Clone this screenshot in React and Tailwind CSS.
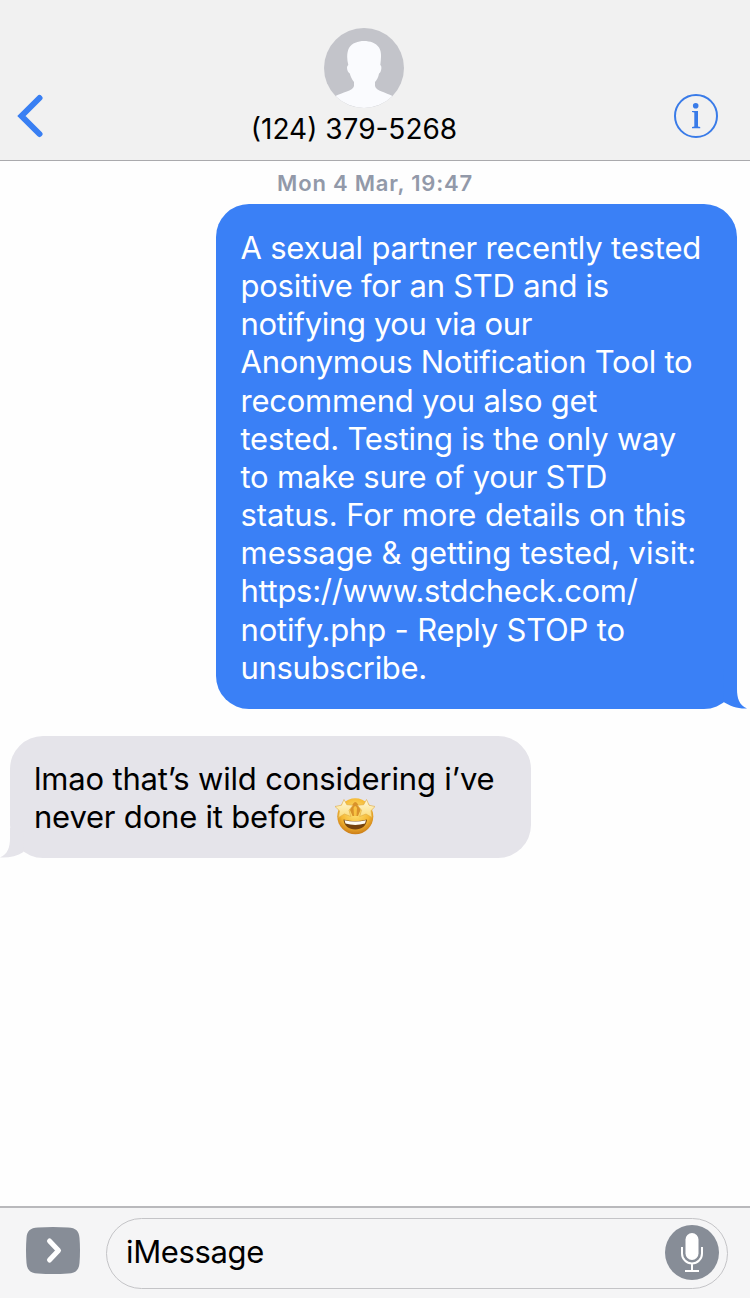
import React from "react";

const sentLines = [
    { text: "A sexual partner recently tested", tracking: "tracking-[-0.2px]" },
    { text: "positive for an STD and is", tracking: "tracking-[-0.25px]" },
    { text: "notifying you via our", tracking: "tracking-[-0.36px]" },
    { text: "Anonymous Notification Tool to", tracking: "tracking-[-0.25px]" },
    { text: "recommend you also get", tracking: "tracking-[-0.25px]" },
    { text: "tested. Testing is the only way", tracking: "tracking-[-0.24px]" },
    { text: "to make sure of your STD", tracking: "tracking-[-0.25px]" },
    { text: "status. For more details on this", tracking: "tracking-[-0.11px]" },
    { text: "message & getting tested, visit:", tracking: "tracking-[-0.03px]" },
    { text: "https://www.stdcheck.com/", tracking: "tracking-[-0.31px]" },
    { text: "notify.php - Reply STOP to", tracking: "tracking-[-0.18px]" },
    { text: "unsubscribe.", tracking: "tracking-[-0.3px]" },
];

const Avatar = () => (
    <svg className="block h-20 w-20" viewBox="0 0 80 80">
        <circle cx="40" cy="40" r="40" fill="#c3c4ca" />
        <path
            d="M11.500 68C18 64.500 29 63 30 58V54C27.500 51 26.500 48 25.800 45.500C23.500 44.500 22 39 23.800 37.500L24.300 37C22.500 30 23 24 25 20C28 15 34 13 40 13C46 13 52 15 55 19.500C58 24 57 31 56.300 37C58.500 38 57 45 55 45.500C54.500 49 53 52 51 54V58C52 63 62 64.500 68.500 68A40 40 0 0 1 11.500 68Z"
            fill="#fafbfe"
        />
    </svg>
);

// Face with star eyes, drawn on a 40 unit grid
const StarStruck = () => (
    <svg className="-mt-0.5 ml-[9px] block h-10 w-10" viewBox="0 0 40 40">
        <defs>
            <radialGradient id="face" cx="50%" cy="38%" r="62%">
                <stop offset="0" stopColor="#ffe67a" />
                <stop offset="0.650" stopColor="#f5b833" />
                <stop offset="1" stopColor="#cb7c17" />
            </radialGradient>
            <linearGradient id="star" x1="0" y1="0" x2="0" y2="1">
                <stop offset="0" stopColor="#fff9dc" />
                <stop offset="1" stopColor="#fbdc78" />
            </linearGradient>
        </defs>
        <circle cx="20.300" cy="20.300" r="18" fill="url(#face)" />
        <path d="M15 14Q18 6 20.300 6T25.500 14L23 20H17.500Z" fill="#d9922a" />
        <path d="M18.500 12Q20.300 8 22 12L21.500 20H19Z" fill="#f8c342" />
        <path d="M8.500 23.500Q20.300 27 32 23.500C31.500 30 26.500 33.500 20.300 33.500S9 30 8.500 23.500Z" fill="#75430f" />
        <path d="M9.500 24.200Q20.300 27 31 24.200L30 27.500Q20.300 30.300 10.500 27.500Z" fill="#fffdf4" />
        <path
            d="M9 3.500L11.800 8.700L18 9.300L14 14.200L15.800 20.500L9.500 18L3.500 21.500L4.500 14.800L0 10.500L6.400 9.200Z"
            fill="url(#star)"
            stroke="#dfaa42"
            strokeWidth="0.600"
            strokeLinejoin="round"
        />
        <path
            d="M31.500 3.500L28.700 8.700L22.500 9.300L26.500 14.200L24.700 20.500L31 18L37 21.500L36 14.800L40 10.500L34.100 9.200Z"
            fill="url(#star)"
            stroke="#dfaa42"
            strokeWidth="0.600"
            strokeLinejoin="round"
        />
    </svg>
);

const Header = () => (
    <header className="flex h-[161px] shrink-0 justify-between border-b border-[#aaaaad] bg-[#f1f1f1] pl-4 pr-8">
        <button className="mt-[94px] h-11 w-11" aria-label="Back">
            <svg className="block h-11 w-11" viewBox="0 0 44 44" fill="none">
                <path d="M23.500 4L5.500 22L23.500 40" stroke="#397ff3" strokeWidth="6" strokeLinecap="round" />
            </svg>
        </button>
        <div className="mr-[26px] flex flex-col items-center pt-7">
            <div className="pl-[19px]">
                <Avatar />
            </div>
            <h1 className="whitespace-nowrap text-[28px] leading-[42px] text-black">(124) 379-5268</h1>
        </div>
        <button className="mt-[94px] h-11 w-11" aria-label="Details">
            <svg className="block h-11 w-11" viewBox="0 0 44 44" fill="none">
                <circle cx="22" cy="22" r="21" stroke="#397be8" strokeWidth="2" />
                <circle cx="21.700" cy="11.700" r="2.800" fill="#397be8" />
                <path d="M18 17H24V32.500L26.200 33V34.200H18V33L20.300 32.500V18.500L18 18Z" fill="#397be8" />
            </svg>
        </button>
    </header>
);

const SentBubble = () => (
    <div className="relative ml-[216px] h-[505px] w-[521px] rounded-[33px] bg-[#3a80f6] pl-[24.5px] pt-[25px] text-[31px] leading-[38.16px] text-white">
        {sentLines.map((line) => (
            <p key={line.text} className={`whitespace-nowrap ${line.tracking}`}>
                {line.text}
            </p>
        ))}
        <svg className="absolute -right-[11px] bottom-0 h-10 w-11" viewBox="0 0 44 40">
            <path d="M19 0H33V20C33 29 35 36 43 39.500C34 40 26 37 19.500 33Z" fill="#3a80f6" />
        </svg>
    </div>
);

const ReceivedBubble = () => (
    <div className="relative ml-[10px] mt-[27px] h-[122px] w-[521px] rounded-[33px] bg-[#e5e4ea] pl-6 pt-6 text-[31px] leading-[38px] text-black">
        <p className="whitespace-nowrap tracking-[-0.18px]">lmao that’s wild considering i’ve</p>
        <div className="flex h-[38px] items-center whitespace-nowrap tracking-[-0.2px]">
            <span>never done it before</span>
            <StarStruck />
        </div>
        <svg className="absolute -left-[10px] bottom-0 h-10 w-11" viewBox="0 0 44 40">
            <path d="M24 10H10V20C10 29 8 36 0 39.500C9 40 17 38 23.500 34Z" fill="#e5e4ea" />
        </svg>
    </div>
);

const Composer = () => (
    <footer className="flex h-[92px] shrink-0 items-center border-t-2 border-[#b9b9bc] bg-[#f5f5f6] pl-[26px] pr-[22px]">
        <svg className="mb-[5px] block h-[47px] w-[54px]" viewBox="0 0 54 47" fill="none">
            <path
                d="M12 0.500Q27 -0.500 42 0.500C50 1 53 4 53.500 11Q54.500 23 53.500 36C53 43 50 46 42 46.500Q27 47.500 12 46.500C4 46 1 43 0.500 36Q-0.500 23 0.500 11C1 4 4 1 12 0.500Z"
                fill="#878d97"
            />
            <path d="M23.500 14L32.500 23.500L23.500 33" stroke="#fff" strokeWidth="5" strokeLinecap="round" strokeLinejoin="round" />
        </svg>
        <div className="ml-[26px] flex h-[71px] flex-1 items-center justify-between rounded-full border border-[#c4c4c7] pb-0.5 pl-[19px] pr-2">
            <span className="text-[31px] leading-[38px] tracking-[-0.35px] text-black">iMessage</span>
            <svg className="block h-[55px] w-[54px]" viewBox="0 0 54 55" fill="none">
                <ellipse cx="27" cy="27.500" rx="27" ry="27.500" fill="#878d97" />
                <rect x="20.500" y="8" width="13" height="27" rx="6.500" fill="#fff" />
                <path d="M17 22V28.500A10 10 0 0 0 37 28.500V22M27 38.500V46M20 46H34" stroke="#fff" strokeWidth="2" />
            </svg>
        </div>
    </footer>
);

const App = () => {
    return (
        <div className="flex h-[1298px] w-[750px] flex-col overflow-hidden bg-[#fefefe] font-['Inter',sans-serif]">
            <Header />
            <main className="flex-1">
                <p className="h-[43px] text-center text-[22px] font-semibold leading-[45px] tracking-[0.8px] text-[#9299a9]">
                    Mon 4 Mar, 19:47
                </p>
                <SentBubble />
                <ReceivedBubble />
            </main>
            <Composer />
        </div>
    );
};

export default App;
